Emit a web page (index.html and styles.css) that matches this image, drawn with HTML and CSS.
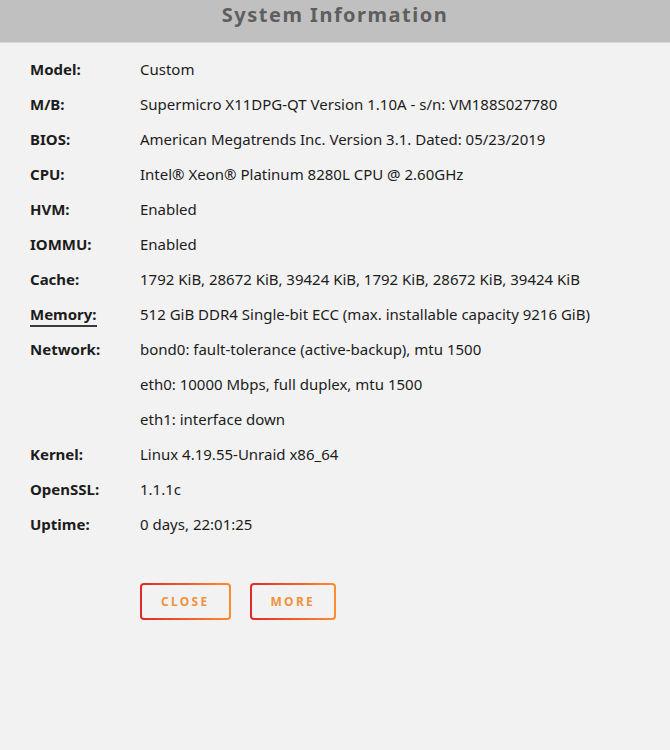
FILE: index.html
```html
<!DOCTYPE html>
<html>
<head>
    <meta charset="UTF-8">
    <title>System Information</title>
    <link rel="stylesheet" href="styles.css">
</head>
<body>
    <div class="title-bar">System Information</div>
    <div class="info">
        <div class="row"><span class="label">Model:</span><span class="value">Custom</span></div>
        <div class="row"><span class="label">M/B:</span><span class="value">Supermicro X11DPG-QT Version 1.10A - s/n: VM188S027780</span></div>
        <div class="row"><span class="label">BIOS:</span><span class="value">American Megatrends Inc. Version 3.1. Dated: 05/23/2019</span></div>
        <div class="row"><span class="label">CPU:</span><span class="value">Intel&reg; Xeon&reg; Platinum 8280L CPU @ 2.60GHz</span></div>
        <div class="row"><span class="label">HVM:</span><span class="value">Enabled</span></div>
        <div class="row"><span class="label">IOMMU:</span><span class="value">Enabled</span></div>
        <div class="row"><span class="label">Cache:</span><span class="value">1792 KiB, 28672 KiB, 39424 KiB, 1792 KiB, 28672 KiB, 39424 KiB</span></div>
        <div class="row"><span class="label"><span class="link">Memory:</span></span><span class="value">512 GiB DDR4 Single-bit ECC (max. installable capacity 9216 GiB)</span></div>
        <div class="row"><span class="label">Network:</span>
            <div class="value">
                <div class="line">bond0: fault-tolerance (active-backup), mtu 1500</div>
                <div class="line">eth0: 10000 Mbps, full duplex, mtu 1500</div>
                <div class="line">eth1: interface down</div>
            </div>
        </div>
        <div class="row"><span class="label">Kernel:</span><span class="value">Linux 4.19.55-Unraid x86_64</span></div>
        <div class="row"><span class="label">OpenSSL:</span><span class="value">1.1.1c</span></div>
        <div class="row"><span class="label">Uptime:</span><span class="value">0 days, 22:01:25</span></div>
    </div>
    <div class="buttons">
        <button class="btn">CLOSE</button>
        <button class="btn">MORE</button>
    </div>
</body>
</html>
```

FILE: styles.css
```css
body {
    font-family: "Noto Sans", "Open Sans", sans-serif;
    background: #f2f2f2;
    color: #1c1c1c;
    margin: 0;
    padding: 0;
    font-size: 15px;
}

.title-bar {
    background: #c0c0c0;
    color: #5e5e5e;
    height: 42px;
    line-height: 29px;
    text-align: center;
    font-size: 20px;
    font-weight: bold;
    letter-spacing: 1.5px;
    border-bottom: 1px solid #d8d8d8;
}

.info {
    padding: 9px 0 0 30px;
}

.row {
    display: flex;
}

.label {
    width: 110px;
    flex-shrink: 0;
    font-weight: bold;
    line-height: 35px;
}

.link {
    border-bottom: 2px solid #3a3a3a;
    padding-bottom: 1px;
}

.value {
    line-height: 35px;
}

.buttons {
    display: flex;
    gap: 19px;
    padding: 41px 0 0 140px;
}

.btn {
    height: 37px;
    padding: 0 19px;
    border: 2px solid transparent;
    border-radius: 4px;
    background:
        linear-gradient(#f2f2f2, #f2f2f2) padding-box,
        linear-gradient(90deg, #e22828, #ff8c2f) border-box;
    color: #f0923c;
    font-family: "Noto Sans", sans-serif;
    font-weight: bold;
    font-size: 12px;
    letter-spacing: 2.3px;
}
```
